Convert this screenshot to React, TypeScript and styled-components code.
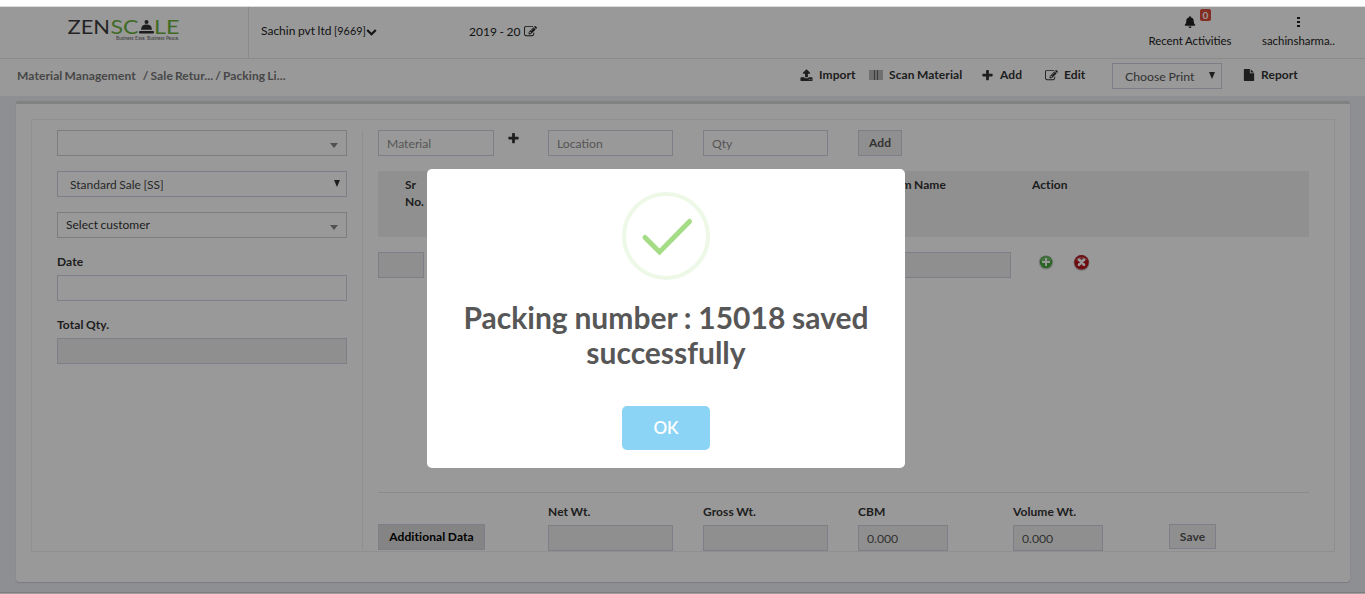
import React from "react";
import styled, { createGlobalStyle } from "styled-components";
import { FaBell } from "react-icons/fa";

const GlobalStyles = createGlobalStyle`
  * { box-sizing: border-box; }
  body {
    margin: 0;
    overflow: hidden;
    font-family: Lato, "Liberation Sans", sans-serif;
    font-size: 12px;
    word-spacing: -0.500px;
    color: #333;
    background: #fff;
  }
  input, button { font-family: inherit; word-spacing: inherit; }
`;

const paths = {
  edit: "M888 1184l116-116-152-152-116 116v56h96v96h56zm440-720q-16-16-33 1l-350 350q-17 17-1 33t33-1l350-350q17-17 1-33zm80 594v190q0 119-84.5 203.5t-203.5 84.5h-832q-119 0-203.5-84.5t-84.5-203.5v-832q0-119 84.5-203.5t203.5-84.5h832q63 0 117 25 15 7 18 23 3 17-9 29l-49 49q-14 14-32 8-23-6-45-6h-832q-66 0-113 47t-47 113v832q0 66 47 113t113 47h832q66 0 113-47t47-113v-126q0-13 9-22l64-64q15-15 35-7t20 29zm-96-738l288 288-672 672h-288v-288zm444 132l-92 92-288-288 92-92q28-28 68-28t68 28l152 152q28 28 28 68t-28 68z",
  plus: "M1600 736v192q0 40-28 68t-68 28h-416v416q0 40-28 68t-68 28h-192q-40 0-68-28t-28-68v-416h-416q-40 0-68-28t-28-68v-192q0-40 28-68t68-28h416v-416q0-40 28-68t68-28h192q40 0 68 28t28 68v416h416q40 0 68 28t28 68z",
  upload: "M1344 1472q0-26-19-45t-45-19-45 19-19 45 19 45 45 19 45-19 19-45zm256 0q0-26-19-45t-45-19-45 19-19 45 19 45 45 19 45-19 19-45zm128-224v320q0 40-28 68t-68 28h-1472q-40 0-68-28t-28-68v-320q0-40 28-68t68-28h427q21 56 70.5 92t110.5 36h256q61 0 110.5-36t70.5-92h427q40 0 68 28t28 68zm-325-648q-17 40-59 40h-256v448q0 26-19 45t-45 19h-256q-26 0-45-19t-19-45v-448h-256q-42 0-59-40-17-39 14-69l448-448q18-19 45-19t45 19l448 448q31 30 14 69z",
  chevron: "M1683 808l-742 741q-19 19-45 19t-45-19l-742-741q-19-19-19-45.5t19-45.5l166-165q19-19 45-19t45 19l531 531 531-531q19-19 45-19t45 19l166 165q19 19 19 45.5t-19 45.5z",
  file: "M1152 512v-472q22 14 36 28l408 408q14 14 28 36h-472zm-128 32q0 40 28 68t68 28h544v1056q0 40-28 68t-68 28h-1344q-40 0-68-28t-28-68v-1600q0-40 28-68t68-28h800v544z",
};

const Icon = ({ name, size = 13 }: { name: keyof typeof paths; size?: number }) => (
  <svg width={size} height={size} viewBox="0 0 1792 1792" fill="currentColor">
    <path d={paths[name]} />
  </svg>
);

const Logo = () => (
  <svg width="116" height="34" viewBox="0 -6 116 34">
    <g fontFamily="Lato, sans-serif" fontSize="18.6">
      <text x="-0.500" y="16.500" textLength="42.5" lengthAdjust="spacingAndGlyphs" fill="#3d3d3d">ZEN</text>
      <text x="42.5" y="16.500" textLength="28" lengthAdjust="spacingAndGlyphs" fill="#6db33f">SC</text>
      <text x="86" y="16.500" textLength="25.5" lengthAdjust="spacingAndGlyphs" fill="#6db33f">LE</text>
    </g>
    <g fill="#333">
      <circle cx="78.500" cy="5" r="2" />
      <path d="M73.500 11q0-3.500 5-3.500t5 3.500z" />
      <rect x="73" y="11" width="11" height="1.800" rx="0.900" />
      <rect x="71" y="14" width="15" height="2.400" rx="1" />
    </g>
    <text x="48" y="23" fontFamily="Lato, sans-serif" fontSize="4.800" wordSpacing="0.5" textLength="63" fill="#666">
      Business Ease. Business Peace.
    </text>
  </svg>
);

const Barcode = () => (
  <svg width="14" height="11" viewBox="0 0 14 11">
    <path d="M1 0v10M3 0v10M11 0v10M13 0v10" stroke="#777" />
    <path d="M5.500 0v10M8.500 0v10" stroke="#666" strokeWidth="2" />
  </svg>
);

const AddRowIcon = () => (
  <svg width="16" height="17" viewBox="0 0 16 17">
    <circle cx="8" cy="8.500" r="7.300" fill="#d6d6d6" />
    <circle cx="8" cy="8" r="6.300" fill="#46a83c" />
    <path d="M2.500 7a5.500 5 0 0 1 11 0z" fill="#72bb6c" />
    <path d="M8 4v8M4 8h8" stroke="#fff" strokeWidth="1.900" />
  </svg>
);

const DeleteRowIcon = () => (
  <svg width="17" height="17" viewBox="0 0 17 17">
    <circle cx="8.500" cy="8.800" r="7.900" fill="#bbb" />
    <circle cx="8.500" cy="8.300" r="7.200" fill="#b8141a" />
    <path d="M2.500 6.500a6.200 5 0 0 1 12 0z" fill="#bf5054" />
    <path d="M6 5.800l5 5M11 5.800l-5 5" stroke="#fff" strokeWidth="2.700" strokeLinecap="round" />
  </svg>
);

const SuccessMark = () => (
  <svg width="88" height="88" viewBox="0 0 88 88" fill="none">
    <circle cx="44" cy="44" r="42" stroke="#edf8e7" strokeWidth="4" />
    <path d="M23 45.500L37.500 60L67.500 29.500" stroke="#a5dc86" strokeWidth="5" strokeLinecap="round" />
  </svg>
);

const App = () => {
  return (
    <Page>
      <GlobalStyles />
      <TopStrip />
      <Shell>
        <Header>
          <Brand>
            <Logo />
          </Brand>
          <Company>
            Sachin pvt ltd <small>[9669]</small> <Icon name="chevron" size={11} />
          </Company>
          <Year>
            2019 - 20 <Icon name="edit" size={13} />
          </Year>
          <HeaderItem $width={100}>
            <BellWrap>
              <FaBell size={12} />
              <Badge>0</Badge>
            </BellWrap>
            Recent Activities
          </HeaderItem>
          <HeaderItem $width={103}>
            <Dots />
            sachinsharma..
          </HeaderItem>
        </Header>

        <Toolbar>
          <Crumbs>
            <span>Material Management</span>
            <span>/ Sale Retur... / Packing Li...</span>
          </Crumbs>
          <Action $width={69}><Icon name="upload" /> Import</Action>
          <Action $width={112}><Barcode /> Scan Material</Action>
          <Action $width={64}><Icon name="plus" /> Add</Action>
          <Action $width={67}><Icon name="edit" /> Edit</Action>
          <PrintSelect>Choose Print <SmallArrow /></PrintSelect>
          <Action $width={122}><Icon name="file" size={12} /> Report</Action>
        </Toolbar>

        <Content>
          <Card>
            <Frame>
              <SidePanel>
                <SelectBox><WideArrow /></SelectBox>
                <SelectBox $indent={12}>Standard Sale [SS] <SmallArrow /></SelectBox>
                <SelectBox $indent={8} $dark>Select customer <WideArrow /></SelectBox>
                <Field>
                  <Label>Date</Label>
                  <Input />
                </Field>
                <Field>
                  <Label>Total Qty.</Label>
                  <Input disabled />
                </Field>
              </SidePanel>

              <MainPanel>
                <EntryRow>
                  <Input $width={116} placeholder="Material" />
                  <PlusCell><Icon name="plus" /></PlusCell>
                  <Input $width={125} placeholder="Location" />
                  <Input $width={125} placeholder="Qty" />
                  <Button $width={44}>Add</Button>
                </EntryRow>

                <TableHead>
                  <Th $width={50}>Sr No.</Th>
                  <Th $width={577} $right>Item Name</Th>
                  <Th $width={200}>Action</Th>
                </TableHead>
                <TableRow>
                  <Input $width={46} disabled />
                  <Input $width={155} disabled />
                  <RowActions>
                    <AddRowIcon />
                    <DeleteRowIcon />
                  </RowActions>
                </TableRow>

                <Totals>
                  <Cell $width={170}><Button $width={107} $strong>Additional Data</Button></Cell>
                  <Cell $width={155}><Label>Net Wt.</Label><Input $width={125} disabled /></Cell>
                  <Cell $width={155}><Label>Gross Wt.</Label><Input $width={125} disabled /></Cell>
                  <Cell $width={155}><Label>CBM</Label><Input $width={90} disabled value="0.000" /></Cell>
                  <Cell $width={156}><Label>Volume Wt.</Label><Input $width={90} disabled value="0.000" /></Cell>
                  <Cell $width={100}><Button $width={47} $height={25}>Save</Button></Cell>
                </Totals>
              </MainPanel>
            </Frame>
          </Card>
        </Content>

        <Overlay>
          <Modal role="dialog">
            <SuccessMark />
            <Title>Packing number : 15018 saved successfully</Title>
            <OkButton>OK</OkButton>
          </Modal>
        </Overlay>
      </Shell>
      <BottomStrip />
    </Page>
  );
};

export default App;

const Page = styled.div`
  height: 594px;
  display: flex;
  flex-direction: column;
`;

const TopStrip = styled.div`
  height: 7px;
  background: #fff;
  border-bottom: 1px solid #dcdcdc;
`;

const BottomStrip = styled.div`
  height: 2px;
  background: #a09f9e;
  border-top: 1px solid #7d7d7f;
`;

const Shell = styled.div`
  position: relative;
  flex: 1;
  display: flex;
  flex-direction: column;
  background: #edeef5;
`;

const Header = styled.header`
  height: 52px;
  display: flex;
  background: #fff;
  border-bottom: 1px solid #e7e7e7;
`;

const Brand = styled.div`
  width: 249px;
  padding: 4px 0 0 68px;
  border-right: 1px solid #e7e7e7;
`;

const Company = styled.div`
  width: 220px;
  padding: 16px 0 0 12px;
  line-height: 16px;
  color: #222;

  small { font-size: 10.800px; }
  svg { vertical-align: -2px; margin-left: -2px; }
`;

const Year = styled.div`
  flex: 1;
  padding-top: 17px;
  line-height: 16px;
  color: #222;

  svg { vertical-align: -2px; margin-left: 1px; }
`;

const HeaderItem = styled.div<{ $width: number }>`
  width: ${(p) => p.$width}px;
  padding-top: 9px;
  margin-right: ${(p) => (p.$width > 100 ? 15 : 7)}px;
  display: flex;
  flex-direction: column;
  align-items: center;
  font-size: 11.400px;
  line-height: 16px;
  color: #222;
  white-space: nowrap;
`;

const BellWrap = styled.div`
  position: relative;
  height: 17px;
`;

const Badge = styled.span`
  position: absolute;
  left: 16px;
  top: -7px;
  width: 11px;
  height: 12px;
  border-radius: 2px;
  background: #dd4b39;
  color: #fff;
  font-size: 10px;
  font-weight: 700;
  line-height: 12px;
  text-align: center;
`;

const Dots = styled.i`
  width: 3px;
  height: 10px;
  margin: 1px 0 6px;
  background: repeating-linear-gradient(#222 0 2px, transparent 2px 4px);
`;

const Toolbar = styled.nav`
  height: 37px;
  display: flex;
  align-items: flex-start;
  background: #fff;
  font-weight: 700;
`;

const Crumbs = styled.div`
  flex: 1;
  display: flex;
  gap: 7px;
  padding: 9px 0 0 17px;
  line-height: 16px;
  letter-spacing: 0.100px;
  word-spacing: -1px;
  color: #777;
`;

const Action = styled.div<{ $width: number }>`
  width: ${(p) => p.$width}px;
  display: flex;
  align-items: center;
  gap: 6px;
  padding-top: 8px;
  line-height: 16px;
  letter-spacing: 0.080px;
  color: #333;
  white-space: nowrap;
`;

const PrintSelect = styled.div`
  width: 110px;
  height: 26px;
  margin: 4px 21px 0 0;
  padding: 0 6px 0 12px;
  display: flex;
  align-items: center;
  justify-content: space-between;
  border: 1px solid #cdd2dc;
  font-size: 12.300px;
  font-weight: 400;
  color: #555;
`;

const SmallArrow = styled.i`
  border: 3.500px solid transparent;
  border-top: 7px solid #333;
  border-bottom: 0;
  margin-bottom: 1px;
`;

const WideArrow = styled.i`
  border: 4px solid transparent;
  border-top: 5px solid #888;
  border-bottom: 0;
  margin: 5px 2px 0 auto;
`;

const Content = styled.main`
  flex: 1;
  padding: 5px 15px 0 16px;
`;

const Card = styled.section`
  height: 481px;
  padding: 15px 15px 0;
  background: #fff;
  border: 0 solid #d8d8d8;
  border-top-width: 3px;
  border-radius: 3px;
  box-shadow: 0 1px 1px rgba(0, 0, 0, 0.12), 0 0 1px rgba(0, 0, 0, 0.15);
`;

const Frame = styled.div`
  height: 433px;
  display: flex;
  border: 1px solid #eee;
`;

const SidePanel = styled.aside`
  width: 331px;
  height: 420px;
  margin-top: 10px;
  padding: 0 15px 0 25px;
  border-right: 1px solid #eee;
`;

const SelectBox = styled.div<{ $indent?: number; $dark?: boolean }>`
  height: 26px;
  margin-bottom: 15px;
  padding: 0 6px ${(p) => (p.$dark ? 1 : 0)}px ${(p) => p.$indent || 0}px;
  display: flex;
  align-items: center;
  justify-content: space-between;
  border: 1px solid ${(p) => (p.$indent === 12 ? "#d0d3de" : "#d0d0d2")};
  color: ${(p) => (p.$dark ? "#333" : "#444")};
`;

const Field = styled.div`
  height: 63px;
`;

const Label = styled.label`
  display: block;
  height: 22px;
  line-height: 17px;
  letter-spacing: 0.080px;
  font-weight: 700;
  color: #333;
`;

const Input = styled.input<{ $width?: number }>`
  display: block;
  width: ${(p) => (p.$width ? p.$width + "px" : "100%")};
  height: 26px;
  padding: 1px 8px 0;
  border: 1px solid #cfd5df;
  background: ${(p) => (p.disabled ? "#eee" : "#fff")};
  font-size: 12.200px;
  color: #555;

  &::placeholder { color: #8f8f8f; }
`;

const MainPanel = styled.div`
  width: 931px;
  margin: 10px 0 0 15px;
`;

const EntryRow = styled.div`
  display: flex;
  gap: 30px;
  height: 41px;
`;

const PlusCell = styled.div`
  width: 54px;
  margin: 2px -30px 0;
  padding-left: 13px;
`;

const Button = styled.button<{ $width: number; $height?: number; $strong?: boolean }>`
  width: ${(p) => p.$width}px;
  height: ${(p) => p.$height || 26}px;
  padding: 0 0 1px;
  border: 1px solid #cfd5df;
  background: ${(p) => (p.$strong ? "#ddd" : "#eee")};
  color: ${(p) => (p.$strong ? "#000" : "#555")};
  font-size: 12px;
  font-weight: 700;
  letter-spacing: 0.100px;
`;

const TableHead = styled.div`
  height: 66px;
  padding: 5px 0 0 27px;
  display: flex;
  background: #f0f0f0;
`;

const Th = styled.div<{ $width: number; $right?: boolean }>`
  width: ${(p) => p.$width}px;
  padding-right: ${(p) => (p.$right ? 86 : 25)}px;
  line-height: 17px;
  letter-spacing: 0.080px;
  font-weight: 700;
  color: #333;
  text-align: ${(p) => (p.$right ? "right" : "left")};
`;

const TableRow = styled.div`
  height: 255px;
  padding-top: 15px;
  display: flex;
  justify-content: space-between;

  input:nth-child(2) { margin-left: auto; }
`;

const RowActions = styled.div`
  width: 298px;
  padding: 2px 0 0 27px;
  display: flex;
  gap: 19px;
`;

const Totals = styled.div`
  height: 59px;
  display: flex;
  border-top: 1px solid #e8e8e8;
`;

const Cell = styled.div<{ $width: number }>`
  width: ${(p) => p.$width}px;
  padding-top: 10px;

  > button { margin-top: 21px; }
`;

const Overlay = styled.div`
  position: absolute;
  inset: 0;
  background: rgba(0, 0, 0, 0.4);
`;

const Modal = styled.div`
  width: 478px;
  height: 299px;
  margin: 162px 0 0 427px;
  padding: 23px 17px 0;
  display: flex;
  flex-direction: column;
  align-items: center;
  border-radius: 5px;
  background: #fff;
`;

const Title = styled.h2`
  margin: 20px 0 36px;
  font-size: 30px;
  line-height: 35px;
  font-weight: 700;
  text-align: center;
  color: #575757;
`;

const OkButton = styled.button`
  width: 88px;
  height: 44px;
  padding: 0 0 2px;
  border: 0;
  border-radius: 5px;
  background: #8cd4f5;
  color: #fff;
  font-size: 17px;
  font-weight: 600;
`;
